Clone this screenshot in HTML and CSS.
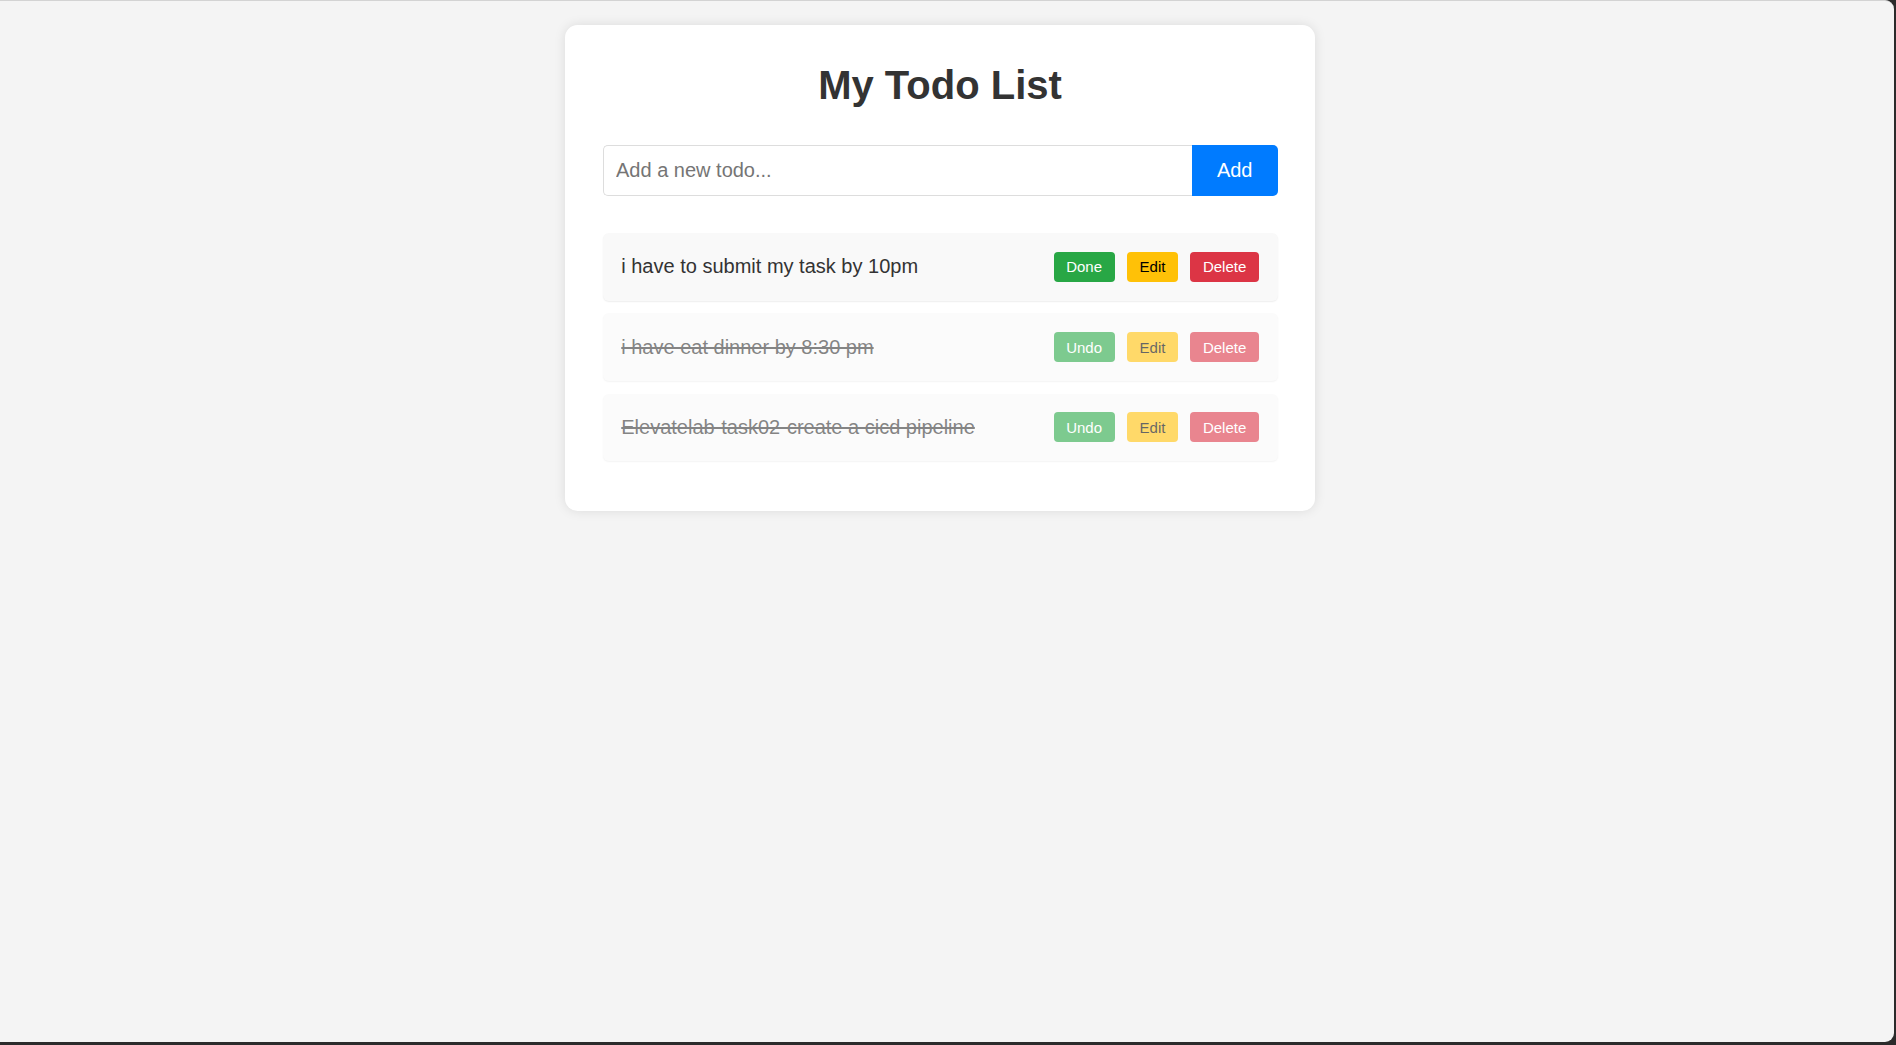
FILE: index.html
```html
<!DOCTYPE html>
<html lang="en">
<head>
<meta charset="utf-8">
<title>My Todo List</title>
<link rel="stylesheet" href="styles.css">
</head>
<body>
<div class="screen">
  <div class="app">
    <div class="card">
      <h1 class="title">My Todo List</h1>
      <form class="add-form">
        <input class="add-input" type="text" placeholder="Add a new todo...">
        <button class="add-btn" type="button">Add</button>
      </form>
      <ul class="todo-list">
        <li class="todo">
          <span class="todo-text">i have to submit my task by 10pm</span>
          <div class="actions">
            <button class="btn btn-done" type="button">Done</button>
            <button class="btn btn-edit" type="button">Edit</button>
            <button class="btn btn-delete" type="button">Delete</button>
          </div>
        </li>
        <li class="todo completed">
          <span class="todo-text">i have eat dinner by 8:30 pm</span>
          <div class="actions">
            <button class="btn btn-done" type="button">Undo</button>
            <button class="btn btn-edit" type="button">Edit</button>
            <button class="btn btn-delete" type="button">Delete</button>
          </div>
        </li>
        <li class="todo completed">
          <span class="todo-text">Elevatelab-task02-create a cicd pipeline</span>
          <div class="actions">
            <button class="btn btn-done" type="button">Undo</button>
            <button class="btn btn-edit" type="button">Edit</button>
            <button class="btn btn-delete" type="button">Delete</button>
          </div>
        </li>
      </ul>
    </div>
  </div>
</div>
</body>
</html>
```
FILE: styles.css
```css
html {
  height: 100%;
  background: #2b2b2b;
}
body {
  margin: 0;
  height: 100%;
  font-family: "Liberation Sans", Arial, sans-serif;
  color: #333;
}
.screen {
  box-sizing: border-box;
  height: calc(100% - 3px);
  margin-right: 2px;
  background: #f4f4f4;
  border-top: 1px solid #d3d3d3;
  border-radius: 0 9px 9px 0;
}
.app {
  width: 1880px;
  padding-top: 24px;
}
.card {
  box-sizing: border-box;
  width: 750px;
  margin: 0 auto;
  padding: 37.5px;
  background: #fff;
  border-radius: 12.5px;
  box-shadow: 0 0 12px rgba(0, 0, 0, 0.1);
}
.title {
  margin: 0 0 37.5px;
  text-align: center;
  font-size: 40px;
  font-weight: bold;
  color: #333;
}
.add-form {
  display: flex;
  margin: 0;
}
.add-input {
  flex: 1;
  box-sizing: border-box;
  height: 50.5px;
  padding: 0 12.5px;
  font-family: "Liberation Sans", Arial, sans-serif;
  font-size: 20px;
  color: #333;
  border: 1px solid #ddd;
  border-right: none;
  border-radius: 5px 0 0 5px;
  outline: none;
}
.add-input::placeholder {
  color: #757575;
}
.add-btn {
  box-sizing: border-box;
  height: 50.5px;
  padding: 0 25px;
  font-family: "Liberation Sans", Arial, sans-serif;
  font-size: 20px;
  color: #fff;
  background: #007bff;
  border: none;
  border-radius: 0 5px 5px 0;
}
.todo-list {
  list-style: none;
  margin: 37.5px 0 0;
  padding: 0;
}
.todo {
  display: flex;
  align-items: center;
  justify-content: space-between;
  padding: 18.75px;
  margin-bottom: 12.8px;
  background: #f9f9f9;
  border-radius: 6px;
  box-shadow: 0 1px 1.5px rgba(0, 0, 0, 0.07);
}
.todo-text {
  font-size: 20px;
  color: #333;
}
.completed {
  opacity: 0.6;
}
.completed .todo-text {
  text-decoration: line-through;
}
.actions {
  display: flex;
  gap: 12.5px;
}
.btn {
  box-sizing: border-box;
  height: 30px;
  padding: 0 12.5px;
  font-family: "Liberation Sans", Arial, sans-serif;
  font-size: 15px;
  border: none;
  border-radius: 4px;
  color: #fff;
}
.btn-done {
  background: #28a745;
}
.btn-edit {
  background: #ffc107;
  color: #000;
}
.btn-delete {
  background: #dc3545;
}
```
